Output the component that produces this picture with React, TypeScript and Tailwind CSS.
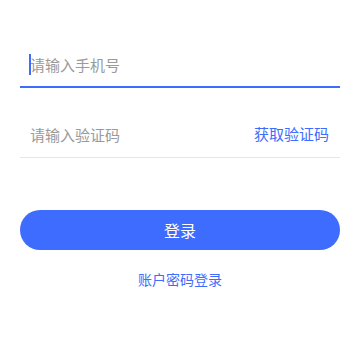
import { useState } from 'react'

export default function App() {
  const [phone, setPhone] = useState('')
  const [code, setCode] = useState('')

  return (
    <div
      className="w-[360px] h-[360px] bg-white px-5 pt-[42px]"
      style={{ fontFamily: '"Noto Sans CJK SC", "Noto Sans", sans-serif' }}
    >
      <div className="relative flex items-center h-[46px] border-b-2 border-[#3d6cfe]">
        <span className="absolute left-[9px] top-[12px] h-[21px] w-[2px] bg-[#3d6cfe]" />
        <input
          value={phone}
          onChange={(e) => setPhone(e.target.value)}
          placeholder="请输入手机号"
          className="w-full h-full pl-[10px] text-[15px] text-[#333] placeholder:text-[#9a9a9a] outline-none bg-transparent"
        />
      </div>

      <div className="mt-6 flex items-center h-[46px] border-b border-[#e6e6e6]">
        <input
          value={code}
          onChange={(e) => setCode(e.target.value)}
          placeholder="请输入验证码"
          className="flex-1 min-w-0 h-full pl-[10px] text-[15px] text-[#333] placeholder:text-[#9a9a9a] outline-none bg-transparent"
        />
        <button className="pr-[11px] text-[15px] text-[#3d6cfe]">获取验证码</button>
      </div>

      <button className="mt-[52px] w-full h-10 rounded-full bg-[#3d6cfe] text-white text-base">
        登录
      </button>

      <div className="mt-[19px] flex justify-center">
        <button className="text-sm leading-5 text-[#3d6cfe]">账户密码登录</button>
      </div>
    </div>
  )
}
